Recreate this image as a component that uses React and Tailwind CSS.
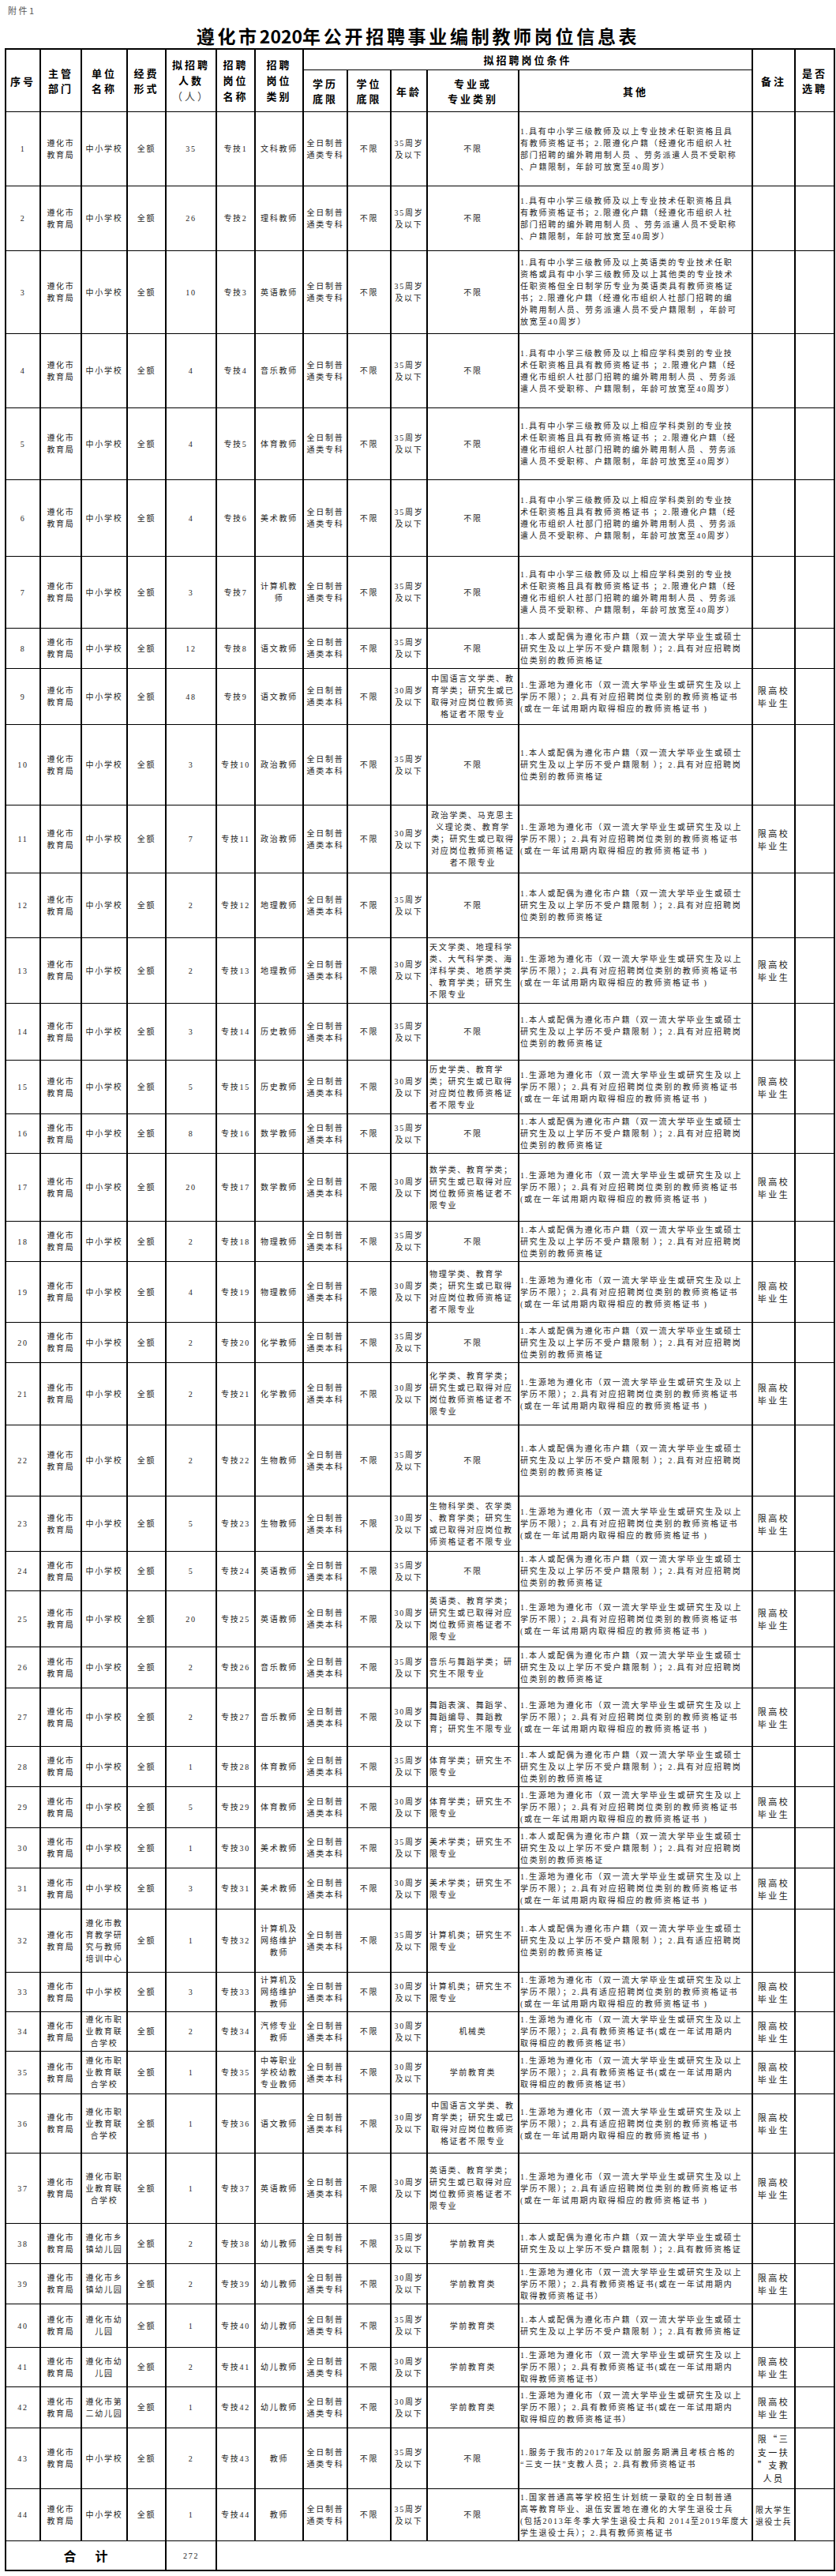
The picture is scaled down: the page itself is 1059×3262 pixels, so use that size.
import React from "react";

const BODY = "font-['Liberation_Serif','Noto_Sans_CJK_SC',serif] text-[10px] leading-[15px] tracking-[1.75px] text-[#262626]";
const HEAD = "font-['Noto_Sans_CJK_SC',sans-serif] font-bold text-[13px] leading-[19px] tracking-[3px] text-black";

const A = "1.具有中小学三级教师及以上专业技术任职资格且具|有教师资格证书；2.限遵化户籍（经遵化市组织人社|部门招聘的编外聘用制人员 、劳务派遣人员不受职称|、户籍限制，年龄可放宽至40周岁）";
const A3 = "1.具有中小学三级教师及以上英语类的专业技术任职|资格或具有中小学三级教师及以上其他类的专业技术|任职资格但全日制学历专业为英语类具有教师资格证|书；2.限遵化户籍（经遵化市组织人社部门招聘的编|外聘用制人员、劳务派遣人员不受户籍限制 ，年龄可|放宽至40周岁）";
const A4 = "1.具有中小学三级教师及以上相应学科类别的专业技|术任职资格且具有教师资格证书 ；2.限遵化户籍（经|遵化市组织人社部门招聘的编外聘用制人员 、劳务派|遣人员不受职称、户籍限制，年龄可放宽至40周岁）";
const B = "1.本人或配偶为遵化市户籍（双一流大学毕业生或硕士|研究生及以上学历不受户籍限制 ）；2.具有对应招聘岗|位类别的教师资格证";
const B2 = "1.本人或配偶为遵化市户籍（双一流大学毕业生或硕士|研究生及以上学历不受户籍限制 ）；2.具有适应招聘岗|位类别的教师资格证";
const C = "1.生源地为遵化市（双一流大学毕业生或研究生及以上|学历不限）；2.具有对应招聘岗位类别的教师资格证书|(或在一年试用期内取得相应的教师资格证书 )";
const C2 = "1.生源地为遵化市（双一流大学毕业生或研究生及以上|学历不限）；2.具有适应招聘岗位类别的教师资格证书|(或在一年试用期内取得相应的教师资格证书 )";
const D = "1.生源地为遵化市（双一流大学毕业生或研究生及以上|学历不限）；2.具有教师资格证书(或在一年试用期内|取得相应的教师资格证书）";
const E = "1.本人或配偶为遵化市户籍（双一流大学毕业生或硕士|研究生及以上学历不受户籍限制 ）；2.具有教师资格证";
const F = "1.生源地为遵化市（双一流大学毕业生或研究生及以上|学历不限）；2.具有教师资格证书(或在一年试用期内|取得教师资格证书）";
const H = "1.服务于我市的2017年及以前服务期满且考核合格的|“三支一扶”支教人员；2.具有教师资格证书";
const I = "1.国家普通高等学校招生计划统一录取的全日制普通|高等教育毕业、退伍安置地在遵化的大学生退役士兵|(包括2013年冬季大学生退役士兵和 2014至2019年度大|学生退役士兵）；2.具有教师资格证书";

const M9 = "中国语言文学类、教|育学类；研究生或已|取得对应岗位教师资|格证者不限专业";
const M11 = "政治学类、马克思主|义理论类、教育学|类；研究生或已取得|对应岗位教师资格证|者不限专业";
const M13 = "天文学类、地理科学|类、大气科学类、海|洋科学类、地质学类|、教育学类；研究生|不限专业";
const M15 = "历史学类、教育学|类；研究生或已取得|对应岗位教师资格证|者不限专业";
const M17 = "数学类、教育学类；|研究生或已取得对应|岗位教师资格证者不|限专业";
const M19 = "物理学类、教育学|类；研究生或已取得|对应岗位教师资格证|者不限专业";
const M21 = "化学类、教育学类；|研究生或已取得对应|岗位教师资格证者不|限专业";
const M23 = "生物科学类、农学类|、教育学类；研究生|或已取得对应岗位教|师资格证者不限专业";
const M25 = "英语类、教育学类；|研究生或已取得对应|岗位教师资格证者不|限专业";
const M26 = "音乐与舞蹈学类；研|究生不限专业";
const M27 = "舞蹈表演、舞蹈学、|舞蹈编导、舞蹈教|育；研究生不限专业";
const M28 = "体育学类；研究生不|限专业";
const M30 = "美术学类；研究生不|限专业";
const M32 = "计算机类；研究生不|限专业";

const ZK = "全日制普|通类专科";
const BK = "全日制普|通类本科";
const A35 = "35周岁|及以下";
const A30 = "30周岁|及以下";
const ZX = "中小学校";
const ZY = "遵化市职|业教育联|合学校";
const GX = "限高校|毕业生";

const rows = [
  { h: "h-[93px]", u: ZX, c: "35", p: "专技1", t: "文科教师", e: ZK, a: A35, m: "不限", o: A },
  { h: "h-[81px]", u: ZX, c: "26", p: "专技2", t: "理科教师", e: ZK, a: A35, m: "不限", o: A },
  { h: "h-[104px]", u: ZX, c: "10", p: "专技3", t: "英语教师", e: ZK, a: A35, m: "不限", o: A3 },
  { h: "h-[93px]", u: ZX, c: "4", p: "专技4", t: "音乐教师", e: ZK, a: A35, m: "不限", o: A4 },
  { h: "h-[90px]", u: ZX, c: "4", p: "专技5", t: "体育教师", e: ZK, a: A35, m: "不限", o: A4 },
  { h: "h-[96px]", u: ZX, c: "4", p: "专技6", t: "美术教师", e: ZK, a: A35, m: "不限", o: A4 },
  { h: "h-[90px]", u: ZX, c: "3", p: "专技7", t: "计算机教|师", e: ZK, a: A35, m: "不限", o: A4 },
  { h: "h-[50px]", u: ZX, c: "12", p: "专技8", t: "语文教师", e: BK, a: A35, m: "不限", o: B },
  { h: "h-[70px]", u: ZX, c: "48", p: "专技9", t: "语文教师", e: BK, a: A30, m: M9, mc: true, o: C, n: GX },
  { h: "h-[101px]", u: ZX, c: "3", p: "专技10", t: "政治教师", e: BK, a: A35, m: "不限", o: B },
  { h: "h-[85px]", u: ZX, c: "7", p: "专技11", t: "政治教师", e: BK, a: A30, m: M11, mc: true, o: C, n: GX },
  { h: "h-[81px]", u: ZX, c: "2", p: "专技12", t: "地理教师", e: BK, a: A35, m: "不限", o: B },
  { h: "h-[82px]", u: ZX, c: "2", p: "专技13", t: "地理教师", e: BK, a: A30, m: M13, o: C, n: GX },
  { h: "h-[71px]", u: ZX, c: "3", p: "专技14", t: "历史教师", e: BK, a: A35, m: "不限", o: B },
  { h: "h-[67px]", u: ZX, c: "5", p: "专技15", t: "历史教师", e: BK, a: A30, m: M15, o: C, n: GX },
  { h: "h-[49px]", u: ZX, c: "8", p: "专技16", t: "数学教师", e: BK, a: A35, m: "不限", o: B },
  { h: "h-[85px]", u: ZX, c: "20", p: "专技17", t: "数学教师", e: BK, a: A30, m: M17, o: C, n: GX },
  { h: "h-[50px]", u: ZX, c: "2", p: "专技18", t: "物理教师", e: BK, a: A35, m: "不限", o: B },
  { h: "h-[76px]", u: ZX, c: "4", p: "专技19", t: "物理教师", e: BK, a: A30, m: M19, o: C, n: GX },
  { h: "h-[50px]", u: ZX, c: "2", p: "专技20", t: "化学教师", e: BK, a: A35, m: "不限", o: B },
  { h: "h-[78px]", u: ZX, c: "2", p: "专技21", t: "化学教师", e: BK, a: A30, m: M21, o: C, n: GX },
  { h: "h-[89px]", u: ZX, c: "2", p: "专技22", t: "生物教师", e: BK, a: A35, m: "不限", o: B },
  { h: "h-[69px]", u: ZX, c: "5", p: "专技23", t: "生物教师", e: BK, a: A30, m: M23, o: C, n: GX },
  { h: "h-[49px]", u: ZX, c: "5", p: "专技24", t: "英语教师", e: BK, a: A35, m: "不限", o: B },
  { h: "h-[70px]", u: ZX, c: "20", p: "专技25", t: "英语教师", e: BK, a: A30, m: M25, o: C, n: GX },
  { h: "h-[51px]", u: ZX, c: "2", p: "专技26", t: "音乐教师", e: BK, a: A35, m: M26, o: B },
  { h: "h-[73px]", u: ZX, c: "2", p: "专技27", t: "音乐教师", e: BK, a: A30, m: M27, o: C, n: GX },
  { h: "h-[50px]", u: ZX, c: "1", p: "专技28", t: "体育教师", e: BK, a: A35, m: M28, o: B },
  { h: "h-[51px]", u: ZX, c: "5", p: "专技29", t: "体育教师", e: BK, a: A30, m: M28, o: C, n: GX },
  { h: "h-[50px]", u: ZX, c: "1", p: "专技30", t: "美术教师", e: BK, a: A35, m: M30, o: B },
  { h: "h-[51px]", u: ZX, c: "3", p: "专技31", t: "美术教师", e: BK, a: A30, m: M30, o: C, n: GX },
  { h: "h-[79px]", u: "遵化市教|育教学研|究与教师|培训中心", c: "1", p: "专技32", t: "计算机及|网络维护|教师", e: BK, a: A35, m: M32, o: B2 },
  { h: "h-[49px]", u: ZX, c: "3", p: "专技33", t: "计算机及|网络维护|教师", e: BK, a: A30, m: M32, o: C2, n: GX },
  { h: "h-[49px]", u: ZY, c: "2", p: "专技34", t: "汽修专业|教师", e: BK, a: A30, m: "机械类", o: D, n: GX },
  { h: "h-[53px]", u: ZY, c: "1", p: "专技35", t: "中等职业|学校幼教|专业教师", e: BK, a: A30, m: "学前教育类", o: D, n: GX },
  { h: "h-[74px]", u: ZY, c: "1", p: "专技36", t: "语文教师", e: BK, a: A30, m: M9, mc: true, o: C2, n: GX },
  { h: "h-[88px]", u: ZY, c: "1", p: "专技37", t: "英语教师", e: BK, a: A30, m: M25, o: C2, n: GX },
  { h: "h-[50px]", u: "遵化市乡|镇幼儿园", c: "2", p: "专技38", t: "幼儿教师", e: ZK, a: A35, m: "学前教育类", o: E },
  { h: "h-[50px]", u: "遵化市乡|镇幼儿园", c: "2", p: "专技39", t: "幼儿教师", e: ZK, a: A30, m: "学前教育类", o: F, n: GX },
  { h: "h-[54px]", u: "遵化市幼|儿园", c: "1", p: "专技40", t: "幼儿教师", e: ZK, a: A35, m: "学前教育类", o: E },
  { h: "h-[49px]", u: "遵化市幼|儿园", c: "2", p: "专技41", t: "幼儿教师", e: ZK, a: A30, m: "学前教育类", o: F, n: GX },
  { h: "h-[51px]", u: "遵化市第|二幼儿园", c: "1", p: "专技42", t: "幼儿教师", e: ZK, a: A30, m: "学前教育类", o: D, n: GX },
  { h: "h-[76px]", u: ZX, c: "2", p: "专技43", t: "教师", e: ZK, a: A35, m: "不限", o: H, n: "限“三|支一扶|”支教|人员", nb: true },
  { h: "h-[65px]", u: ZX, c: "1", p: "专技44", t: "教师", e: ZK, a: A35, m: "不限", o: I, n: "限大学生|退役士兵", ns: true },
];

function Lines({ t }) {
  return t.split("|").map((l, i) => (
    <div key={i} className="whitespace-pre">
      {l}
    </div>
  ));
}

function Cell({ className = "", children }) {
  return <div className={"bg-white flex flex-col items-center justify-center text-center " + className}>{children}</div>;
}

export default function App() {
  return (
    <div className="w-[1059px] min-h-[3262px] bg-white font-['Noto_Sans_CJK_SC',sans-serif]">
      <div className="h-[26px] pl-[10px] pt-[6px] text-[11px] leading-[14px] tracking-[2.5px] text-[#555]">附件1</div>
      <div className="h-[35px] pt-[6px] text-center text-[23px] leading-[26px] font-bold tracking-[3.7px] text-black">
        遵化市<span className="tracking-normal">2020</span>年公开招聘事业编制教师岗位信息表
      </div>
      <div className="ml-[6px] w-[1052px] border-2 border-black">
        <div className="grid grid-cols-[42px_50px_56px_47px_62px_47px_59px_54px_53px_44px_114px_294px_52px_48px] gap-x-[2px] gap-y-px bg-black">
          <Cell className={"row-span-2 " + HEAD}>序号</Cell>
          <Cell className={"row-span-2 " + HEAD}>
            <div>主管</div>
            <div>部门</div>
          </Cell>
          <Cell className={"row-span-2 " + HEAD}>
            <div>单位</div>
            <div>名称</div>
          </Cell>
          <Cell className={"row-span-2 " + HEAD}>
            <div>经费</div>
            <div>形式</div>
          </Cell>
          <Cell className={"row-span-2 leading-[20px] " + HEAD}>
            <div>拟招聘</div>
            <div>人数</div>
            <div className="font-normal text-[#444]">（人）</div>
          </Cell>
          <Cell className={"row-span-2 leading-[20px] " + HEAD}>
            <div>招聘</div>
            <div>岗位</div>
            <div>名称</div>
          </Cell>
          <Cell className={"row-span-2 leading-[20px] " + HEAD}>
            <div>招聘</div>
            <div>岗位</div>
            <div>类别</div>
          </Cell>
          <Cell className={"col-span-5 h-[25px] " + HEAD}>拟招聘岗位条件</Cell>
          <Cell className={"row-span-2 " + HEAD}>备注</Cell>
          <Cell className={"row-span-2 " + HEAD}>
            <div>是否</div>
            <div>选聘</div>
          </Cell>
          <Cell className={"h-[52px] " + HEAD}>
            <div>学历</div>
            <div>底限</div>
          </Cell>
          <Cell className={HEAD}>
            <div>学位</div>
            <div>底限</div>
          </Cell>
          <Cell className={HEAD}>年龄</Cell>
          <Cell className={HEAD}>
            <div>专业或</div>
            <div>专业类别</div>
          </Cell>
          <Cell className={HEAD}>其他</Cell>

          {rows.map((r, i) => (
            <React.Fragment key={i}>
              <Cell className={r.h + " " + BODY}>{i + 1}</Cell>
              <Cell className={BODY}>
                <Lines t="遵化市|教育局" />
              </Cell>
              <Cell className={BODY}>
                <Lines t={r.u} />
              </Cell>
              <Cell className={BODY}>全额</Cell>
              <Cell className={BODY}>{r.c}</Cell>
              <Cell className={BODY}>{r.p}</Cell>
              <Cell className={BODY}>
                <Lines t={r.t} />
              </Cell>
              <Cell className={BODY}>
                <Lines t={r.e} />
              </Cell>
              <Cell className={BODY}>不限</Cell>
              <Cell className={BODY}>
                <Lines t={r.a} />
              </Cell>
              {r.m.includes("|") && !r.mc ? (
                <Cell className={"!items-start !text-left pl-[2px] " + BODY}>
                  <Lines t={r.m} />
                </Cell>
              ) : (
                <Cell className={BODY}>
                  <Lines t={r.m} />
                </Cell>
              )}
              <Cell className={"!items-start !text-left pl-[1px] " + BODY}>
                <Lines t={r.o} />
              </Cell>
              {r.ns ? (
                <Cell className="font-['Noto_Sans_CJK_SC',sans-serif] text-[10px] leading-[15px] tracking-[1.5px] text-[#1a1a1a]">
                  <Lines t={r.n} />
                </Cell>
              ) : r.nb ? (
                <Cell className="font-['Noto_Sans_CJK_SC',sans-serif] text-[11px] leading-[16.5px] tracking-[2.5px] text-[#1a1a1a]">
                  <Lines t={r.n} />
                </Cell>
              ) : (
                <Cell className="font-['Noto_Sans_CJK_SC',sans-serif] text-[11px] leading-[16px] tracking-[2.5px] text-[#1a1a1a]">
                  {r.n ? <Lines t={r.n} /> : null}
                </Cell>
              )}
              <Cell />
            </React.Fragment>
          ))}

          <Cell className="col-span-4 h-[36px] !flex-row gap-[24px] font-['Noto_Sans_CJK_SC',sans-serif] font-bold text-[16px] text-black">
            <span>合</span>
            <span>计</span>
          </Cell>
          <Cell className={BODY}>272</Cell>
          <Cell className="col-span-9" />
        </div>
      </div>
    </div>
  );
}
